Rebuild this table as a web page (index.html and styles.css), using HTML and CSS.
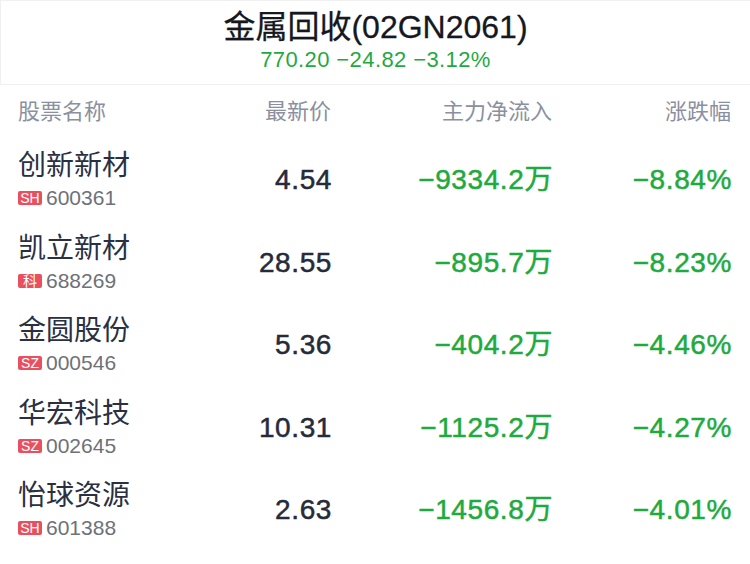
FILE: index.html
```html
<!DOCTYPE html>
<html lang="zh">
<head>
<meta charset="utf-8">
<link rel="stylesheet" href="styles.css">
</head>
<body>
<div class="page">
  <header class="top">
    <div class="title">金属回收(02GN2061)</div>
    <div class="quote">770.20 −24.82 −3.12%</div>
  </header>
  <div class="table">
    <div class="row head">
      <div class="c name">股票名称</div>
      <div class="c num">最新价</div>
      <div class="c num">主力净流入</div>
      <div class="c num">涨跌幅</div>
    </div>
    <div class="row item">
      <div class="c name"><div class="nm">创新新材</div><div class="code"><span class="tag">SH</span>600361</div></div>
      <div class="c num price">4.54</div>
      <div class="c num green">−9334.2万</div>
      <div class="c num green">−8.84%</div>
    </div>
    <div class="row item">
      <div class="c name"><div class="nm">凯立新材</div><div class="code"><span class="tag">科</span>688269</div></div>
      <div class="c num price">28.55</div>
      <div class="c num green">−895.7万</div>
      <div class="c num green">−8.23%</div>
    </div>
    <div class="row item">
      <div class="c name"><div class="nm">金圆股份</div><div class="code"><span class="tag">SZ</span>000546</div></div>
      <div class="c num price">5.36</div>
      <div class="c num green">−404.2万</div>
      <div class="c num green">−4.46%</div>
    </div>
    <div class="row item">
      <div class="c name"><div class="nm">华宏科技</div><div class="code"><span class="tag">SZ</span>002645</div></div>
      <div class="c num price">10.31</div>
      <div class="c num green">−1125.2万</div>
      <div class="c num green">−4.27%</div>
    </div>
    <div class="row item">
      <div class="c name"><div class="nm">怡球资源</div><div class="code"><span class="tag">SH</span>601388</div></div>
      <div class="c num price">2.63</div>
      <div class="c num green">−1456.8万</div>
      <div class="c num green">−4.01%</div>
    </div>
  </div>
</div>
</body>
</html>
```

FILE: styles.css
```css
html, body {
  margin: 0;
  padding: 0;
  background: #ffffff;
}
body {
  font-family: "Liberation Sans", "Noto Sans CJK SC", sans-serif;
  width: 750px;
  height: 564px;
  overflow: hidden;
}
.page {
  width: 750px;
}
.top {
  box-sizing: border-box;
  height: 85px;
  border: 1px solid #f0f0f0;
  border-right: none;
  display: flex;
  flex-direction: column;
  align-items: center;
  padding-top: 7px;
}
.title {
  font-size: 32px;
  line-height: 38px;
  color: #15181f;
  -webkit-text-stroke: 0.3px #15181f;
}
.quote {
  font-size: 22px;
  line-height: 28px;
  letter-spacing: 0.4px;
  color: #1faa3f;
}
.table {
  padding: 0 19px 0 18px;
}
.row {
  display: grid;
  grid-template-columns: 182px 131px 221px 179px;
  align-items: start;
}
.head {
  height: 52px;
  font-size: 22px;
  color: #8a90a0;
  font-family: "Noto Sans CJK SC", sans-serif;
}
.head .c {
  line-height: 28px;
  padding-top: 10px;
}
.item {
  height: 82.5px;
}
.num {
  text-align: right;
}
.name {
  padding-top: 9px;
}
.nm {
  font-family: "Noto Sans CJK SC", sans-serif;
  font-size: 28px;
  line-height: 34px;
  color: #2a3042;
}
.code {
  display: flex;
  align-items: center;
  font-size: 21px;
  line-height: 24px;
  color: #6e7178;
  margin-top: 6px;
}
.tag {
  display: inline-flex;
  align-items: center;
  justify-content: center;
  width: 24px;
  height: 14px;
  border-radius: 2px;
  background: #e8505f;
  color: #fff;
  font-size: 14px;
  margin-right: 4px;
}
.price, .green {
  font-size: 28px;
  line-height: 32px;
  letter-spacing: 0.6px;
  margin-right: -1px;
  padding-top: 27px;
  -webkit-text-stroke: 0.5px currentColor;
}
.price {
  color: #262b3a;
}
.green {
  color: #1faa3f;
}
```
